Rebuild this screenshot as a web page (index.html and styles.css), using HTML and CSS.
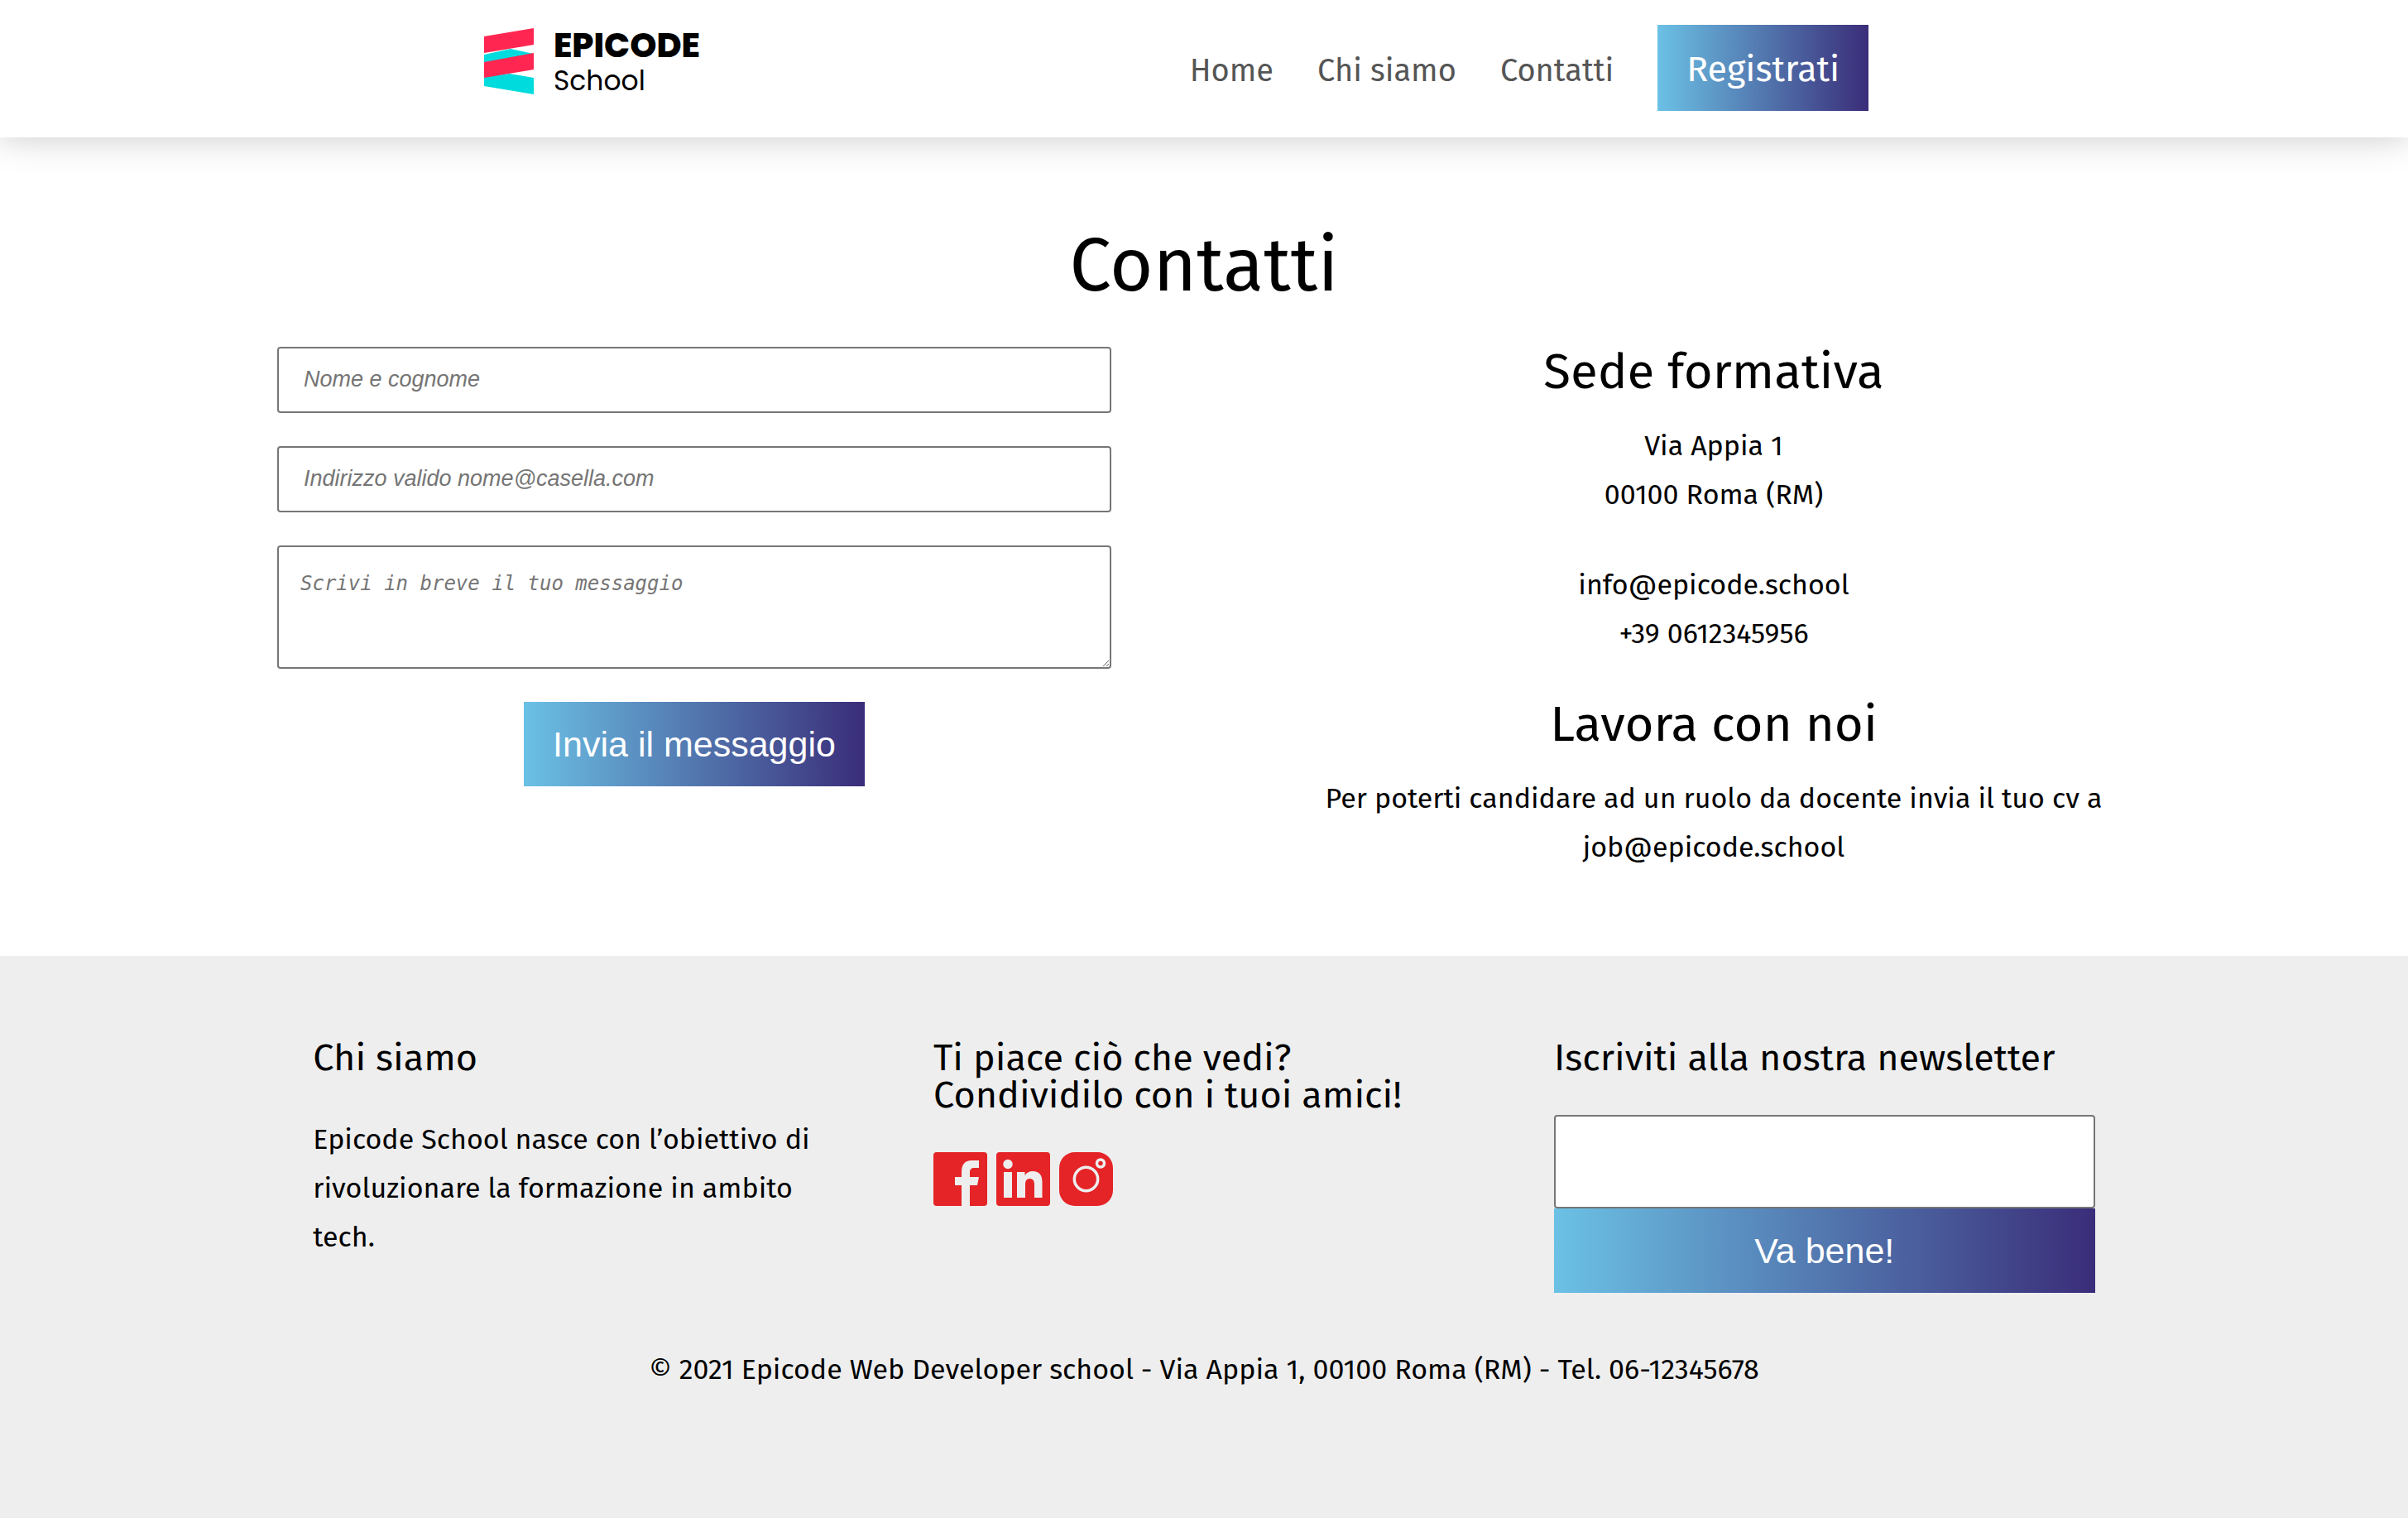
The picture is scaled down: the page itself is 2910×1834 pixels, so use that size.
FILE: index.html
```html
<!DOCTYPE html>
<html lang="it">
<head>
<meta charset="utf-8">
<meta name="viewport" content="width=device-width, initial-scale=1">
<title>Contatti - Epicode School</title>
<link rel="stylesheet" href="styles.css">
</head>
<body>
<header class="site-header">
  <a class="logo" href="#">
    <svg class="logo-mark" viewBox="0 0 60 80" aria-hidden="true">
      <path fill="#00dbde" d="M0 32 32 25 60 31 0 42zM0 59 31 55 60 60V80L0 70z"/>
      <path fill="#ff2751" d="M0 10 60 0V20L0 30zM0 41 60 30V50L0 60z"/>
    </svg>
    <span class="logo-text"><span class="logo-name">EPICODE</span><span class="logo-sub">School</span></span>
  </a>
  <nav class="nav">
    <a class="nav-link" href="#">Home</a>
    <a class="nav-link" href="#">Chi siamo</a>
    <a class="nav-link" href="#">Contatti</a>
    <a class="button nav-button" href="#">Registrati</a>
  </nav>
</header>

<main class="main">
  <h1 class="title">Contatti</h1>
  <div class="contact">
    <form class="form">
      <input class="field" type="text" placeholder="Nome e cognome" aria-label="Nome e cognome">
      <input class="field" type="email" placeholder="Indirizzo valido nome@casella.com" aria-label="Indirizzo email">
      <textarea class="field message" placeholder="Scrivi in breve il tuo messaggio" aria-label="Messaggio"></textarea>
      <button class="button" type="submit">Invia il messaggio</button>
    </form>
    <div class="info">
      <section>
        <h2 class="heading">Sede formativa</h2>
        <p>Via Appia 1<br>00100 Roma (RM)</p>
        <p class="info-contacts"><a href="mailto:info@epicode.school">info@epicode.school</a><br>+39 0612345956</p>
      </section>
      <section>
        <h2 class="heading">Lavora con noi</h2>
        <p>Per poterti candidare ad un ruolo da docente invia il tuo cv a<br><a href="mailto:job@epicode.school">job@epicode.school</a></p>
      </section>
    </div>
  </div>
</main>

<footer class="footer">
  <div class="footer-columns">
    <section>
      <h3 class="footer-heading">Chi siamo</h3>
      <p>Epicode School nasce con l’obiettivo di rivoluzionare la formazione in ambito tech.</p>
    </section>
    <section>
      <h3 class="footer-heading">Ti piace ciò che vedi?<br>Condividilo con i tuoi amici!</h3>
      <div class="social">
        <a href="#" aria-label="Facebook"><svg viewBox="0 0 65 65">
          <rect width="65" height="65" rx="4" fill="#e52427"/>
          <path fill="#eee" d="M34 65V40H26V30H34V24C34 15 38 10 46 10H55V19H49C46 19 44 21 44 24V30H55L53 40H44V65z"/>
        </svg></a>
        <a href="#" aria-label="LinkedIn"><svg viewBox="0 0 65 65">
          <rect width="65" height="65" rx="4" fill="#e52427"/>
          <circle cx="14" cy="14.500" r="5.700" fill="#eee"/>
          <path fill="#eee" d="M9 24H19V55H9zM25 24H34.500V28C37 24.500 40 23 44 23C52 23 55.500 28 55.500 36V55H46V39C46 35 44.500 32 40.500 32C36.500 32 35 35 35 39V55H25z"/>
        </svg></a>
        <a href="#" aria-label="Instagram"><svg viewBox="0 0 65 65">
          <rect width="65" height="65" rx="19" fill="#e52427"/>
          <circle cx="32.500" cy="32.500" r="14.200" fill="none" stroke="#eee" stroke-width="3.500"/>
          <circle cx="50" cy="13.500" r="4.500" fill="none" stroke="#eee" stroke-width="3.500"/>
        </svg></a>
      </div>
    </section>
    <section>
      <h3 class="footer-heading" id="newsletter">Iscriviti alla nostra newsletter</h3>
      <form class="newsletter">
        <input class="newsletter-field" type="email" aria-labelledby="newsletter">
        <button class="button" type="submit">Va bene!</button>
      </form>
    </section>
  </div>
  <p class="copyright">© 2021 Epicode Web Developer school - Via Appia 1, 00100 Roma (RM) - Tel. 06-12345678</p>
</footer>
</body>
</html>
```
FILE: styles.css
```css
* {
  box-sizing: border-box;
}

body {
  display: flex;
  flex-direction: column;
  min-height: 100vh;
  margin: 0;
  background: #fff;
  color: #000;
  font: 34px/59px "Fira Sans", "Noto Sans", sans-serif;
}

h1, h2, h3, p {
  margin: 0;
  font-weight: 400;
}

a {
  color: inherit;
  text-decoration: none;
}

.site-header {
  display: flex;
  align-items: flex-start;
  justify-content: space-between;
  padding: 30px 22.4% 32px 20.1%;
  box-shadow: 0 0 40px rgba(0, 0, 0, 0.22);
}

.logo {
  display: flex;
  gap: 24px;
  padding-top: 4px;
}

.logo-mark {
  width: 60px;
  height: 80px;
}

.logo-text {
  display: flex;
  flex-direction: column;
  font-family: Poppins, Inter, sans-serif;
}

.logo-name {
  font-size: 41px;
  font-weight: 800;
  line-height: 42px;
}

.logo-sub {
  font-size: 33px;
  line-height: 44px;
}

.nav {
  display: flex;
  align-items: baseline;
  gap: 53px;
}

.nav-link {
  color: #555;
  font-size: 38px;
}

.button {
  padding: 22px 35px;
  border: 0;
  background: linear-gradient(to right, #6bc1e5, #3a2d79);
  color: #fff;
  font: 43px/58px "Liberation Sans", Arial, sans-serif;
  text-align: center;
}

.nav-button {
  padding: 24px 35px 20px;
  font: 43px/60px "Fira Sans", "Noto Sans", sans-serif;
}

.main {
  padding: 107px 10% 102px;
}

.title {
  font-size: 90px;
  line-height: 96px;
  text-align: center;
}

.contact {
  display: grid;
  grid-template-columns: 1fr 1fr;
  gap: 136px;
  margin-top: 50px;
}

.form {
  display: flex;
  flex-direction: column;
  align-items: center;
  gap: 40px;
  padding: 0 44px;
}

.field {
  display: block;
  width: 100%;
  height: 80px;
  padding: 0 30px 2px;
  border: 2px solid #767676;
  border-radius: 4px;
  font: 27px "Liberation Sans", Arial, sans-serif;
}

.field::placeholder {
  color: #757575;
  font-style: italic;
}

.message {
  height: 149px;
  padding: 28px 26px;
  font: 24px/32px Consolas, "DejaVu Sans Mono", monospace;
}

.info {
  display: flex;
  flex-direction: column;
  gap: 50px;
  text-align: center;
}

.heading {
  margin-bottom: 30px;
  font-size: 60px;
  line-height: 60px;
}

.info-contacts {
  margin-top: 50px;
}

.footer {
  flex: 1;
  padding: 101px 13%;
  background: #eee;
}

.footer-columns {
  display: grid;
  grid-template-columns: repeat(3, 1fr);
  gap: 96px;
}

.footer-heading {
  margin-bottom: 46px;
  font-size: 45px;
  line-height: 45px;
}

.social {
  display: flex;
  gap: 11px;
}

.social svg {
  display: block;
  width: 65px;
  height: 65px;
}

.newsletter {
  display: flex;
  flex-direction: column;
}

.newsletter-field {
  height: 113px;
  padding: 0 30px;
  border: 2px solid #767676;
  border-radius: 4px;
  background: #fff;
  font: 27px "Liberation Sans", Arial, sans-serif;
}

.copyright {
  margin-top: 63px;
  text-align: center;
}
```
